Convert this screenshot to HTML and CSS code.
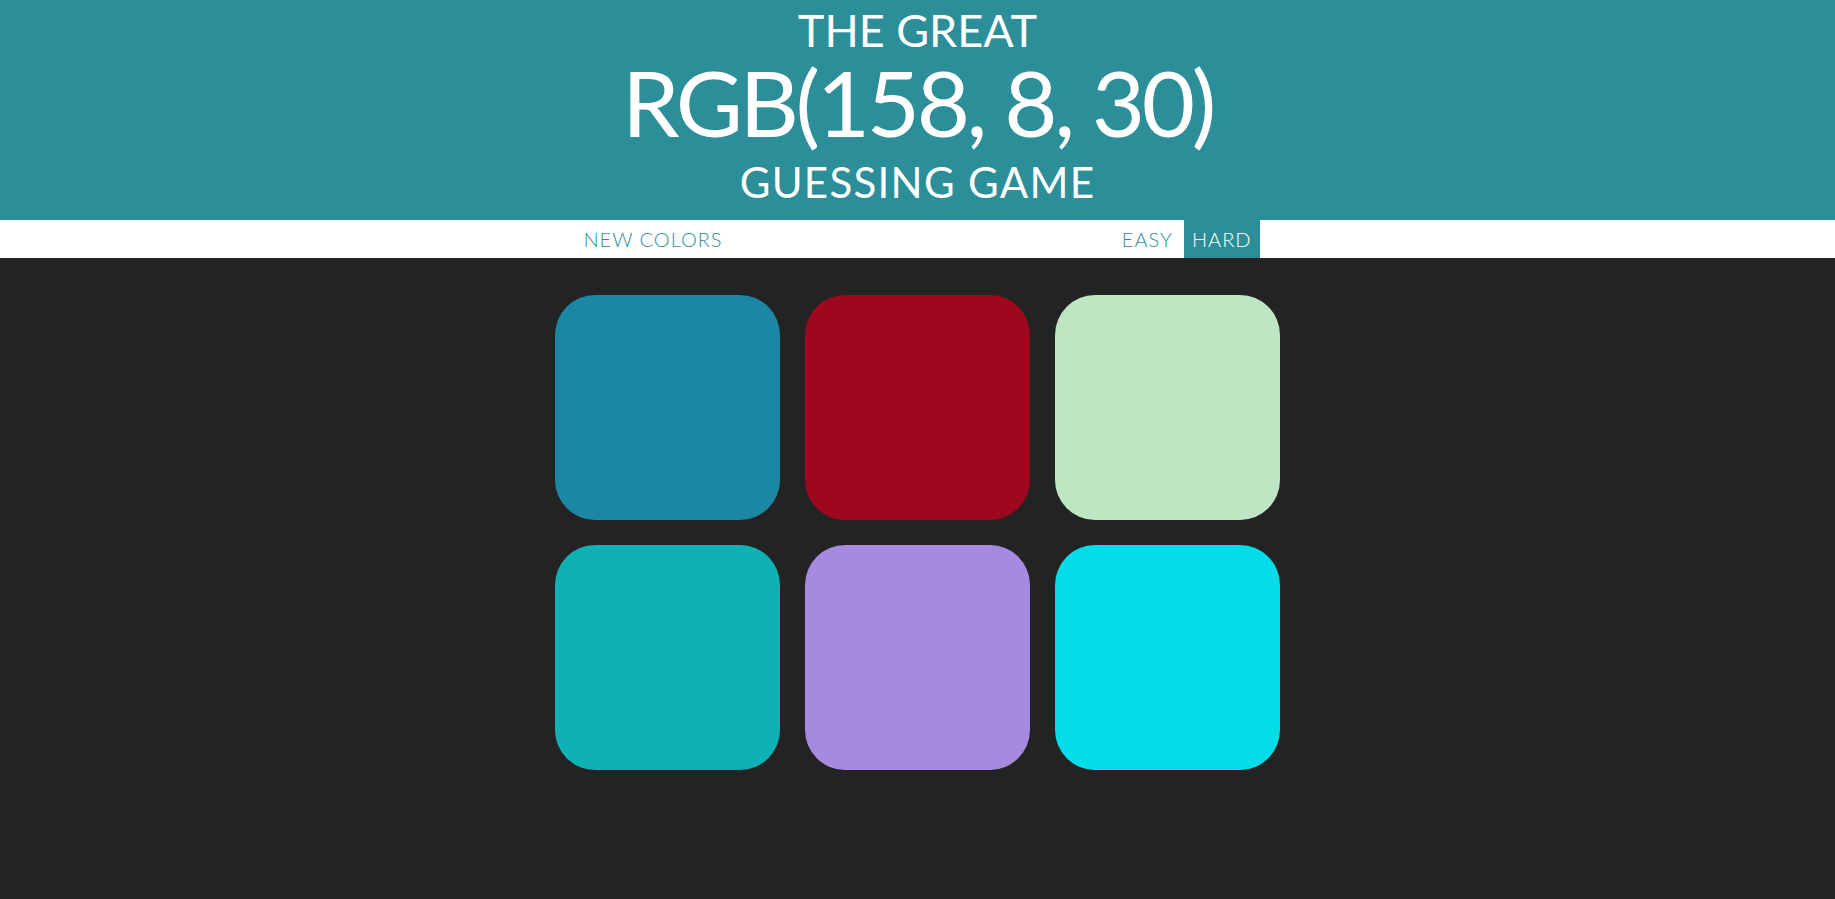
FILE: index.html
```html
<!DOCTYPE html>
<html lang="en">
<head>
<meta charset="utf-8">
<title>Color Game</title>
<link rel="stylesheet" href="styles.css">
</head>
<body>
<h1 class="title">
  <span class="title-line title-first">The Great</span>
  <span class="title-rgb">RGB(158, 8, 30)</span>
  <span class="title-line title-last">Guessing Game</span>
</h1>
<div class="stripe">
  <div class="stripe-inner">
    <button class="btn">New Colors</button>
    <span class="message"></span>
    <div class="modes">
      <button class="btn mode">Easy</button>
      <button class="btn mode selected">Hard</button>
    </div>
  </div>
</div>
<div class="board">
  <div class="square sq1"></div>
  <div class="square sq2"></div>
  <div class="square sq3"></div>
  <div class="square sq4"></div>
  <div class="square sq5"></div>
  <div class="square sq6"></div>
</div>
</body>
</html>
```
FILE: styles.css
```css
html, body {
  margin: 0;
  padding: 0;
}
body {
  background: #232323;
  font-family: "Lato", "Noto Sans", sans-serif;
  min-height: 899px;
}
.title {
  margin: 0;
  height: 220px;
  box-sizing: border-box;
  background: #2c8e99;
  color: #ffffff;
  text-align: center;
  font-weight: 400;
  text-transform: uppercase;
  display: flex;
  flex-direction: column;
  align-items: center;
  padding-top: 6px;
}
.title-line {
  display: block;
  line-height: 48px;
}
.title-first {
  font-size: 45px;
  letter-spacing: 0px;
}
.title-rgb {
  display: block;
  font-size: 92px;
  line-height: 92px;
  letter-spacing: -3.4px;
  margin-top: 2px;
}
.title-last {
  font-size: 42px;
  letter-spacing: 1.3px;
  margin-top: 10px;
}
.stripe {
  background: #ffffff;
  height: 38px;
}
.stripe-inner {
  width: 750px;
  height: 38px;
  margin: 0 auto;
  box-sizing: border-box;
  padding: 0 33px;
  display: flex;
  align-items: stretch;
  justify-content: space-between;
}
.modes {
  display: flex;
  gap: 3px;
}
.btn {
  border: none;
  background: none;
  margin: 0;
  padding: 0 8px;
  height: 38px;
  font-family: "Lato", "Noto Sans", sans-serif;
  font-weight: 300;
  font-size: 20px;
  letter-spacing: 1px;
  text-transform: uppercase;
  color: #2c8e99;
  cursor: pointer;
}
.btn.selected {
  background: #2c8e99;
  color: #ffffff;
}
.board {
  display: grid;
  grid-template-columns: repeat(3, 225px);
  gap: 25px;
  justify-content: center;
  padding-top: 37px;
  margin-left: -1px;
}
.square {
  width: 225px;
  height: 225px;
  border-radius: 40px;
}
.sq1 { background: #1b87a4; }
.sq2 { background: #9e081e; }
.sq3 { background: #bfe6c2; }
.sq4 { background: #10b1b4; }
.sq5 { background: #a58adf; }
.sq6 { background: #04dce8; }
```
